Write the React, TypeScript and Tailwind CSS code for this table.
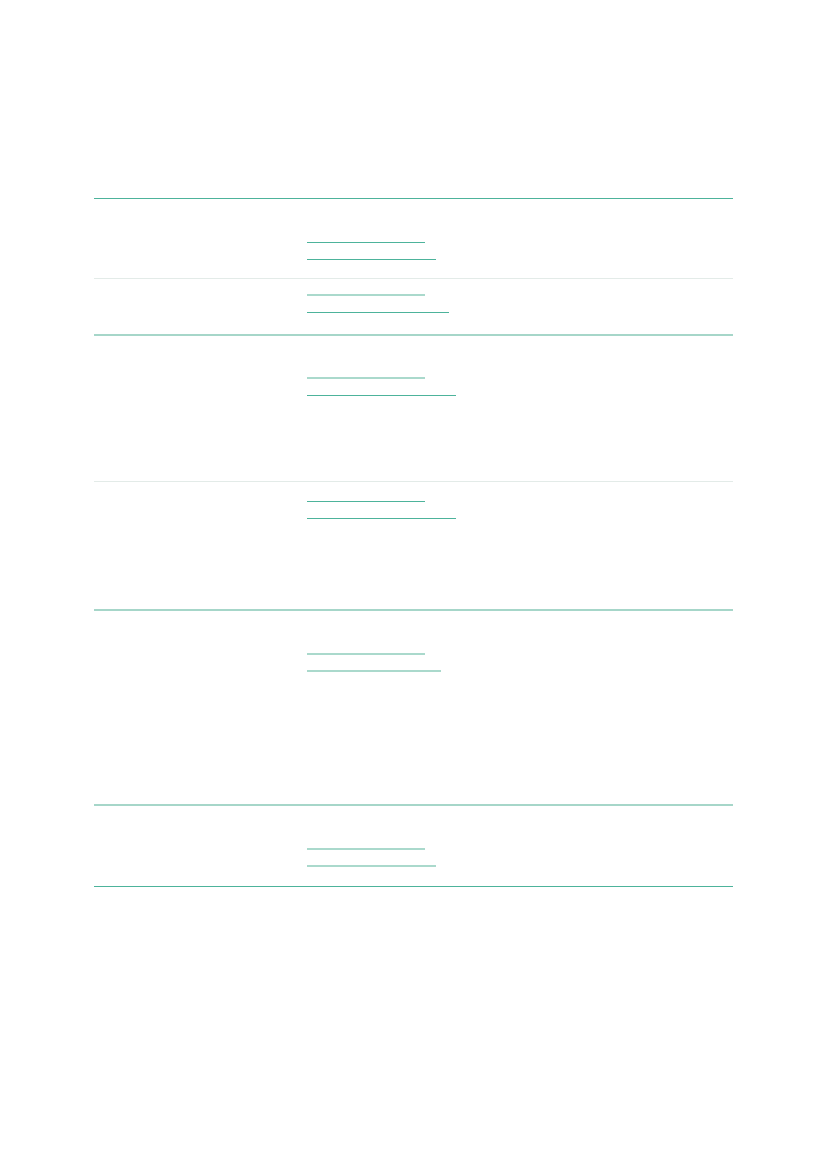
import React from 'react'

interface Row {
  height: string
  pad: string
  border: string
  links: { width: string; color: string }[]
}

// line colours taken from the screenshot; pale lines sit across two pixels
const dark = 'border-b border-[#4db39b]'
const pale = 'border-b-2 border-[#aad9cc]'

const rows: Row[] = [
  {
    height: 'h-[80px]',
    pad: 'pt-[27px]',
    border: 'border-b border-[#e3ebe8]',
    links: [
      { width: 'w-[118px]', color: dark },
      { width: 'w-[129px]', color: dark },
    ],
  },
  {
    height: 'h-[57px]',
    pad: 'pt-0',
    border: 'border-b-2 border-[#a6d6c9]',
    links: [
      { width: 'w-[118px]', color: pale },
      { width: 'w-[142px]', color: dark },
    ],
  },
  {
    height: 'h-[146px]',
    pad: 'pt-[26px]',
    border: 'border-b border-[#e3ebe8]',
    links: [
      { width: 'w-[118px]', color: pale },
      { width: 'w-[149px]', color: dark },
    ],
  },
  {
    height: 'h-[129px]',
    pad: 'pt-[3px]',
    border: 'border-b-2 border-[#a6d6c9]',
    links: [
      { width: 'w-[118px]', color: dark },
      { width: 'w-[149px]', color: dark },
    ],
  },
  {
    height: 'h-[195px]',
    pad: 'pt-[27px]',
    border: 'border-b-2 border-[#a6d6c9]',
    links: [
      { width: 'w-[118px]', color: pale },
      { width: 'w-[134px]', color: pale },
    ],
  },
  {
    height: 'h-[81px]',
    pad: 'pt-[27px]',
    border: 'border-b border-[#4db39b]',
    links: [
      { width: 'w-[118px]', color: pale },
      { width: 'w-[129px]', color: pale },
    ],
  },
]

export default function App() {
  return (
    <div className="min-h-[1169px] bg-white pt-[198px] font-['Liberation_Sans',sans-serif]">
      <div className="ml-[94px] w-[639px] border-t border-[#4db39b]">
        {rows.map((row, i) => (
          <div
            key={i}
            className={`grid grid-cols-[191px_257px_191px] box-border ${row.height} ${row.border}`}
          >
            {/* Label */}
            <div />

            {/* Links */}
            <div className={`pl-[22px] ${row.pad}`}>
              {row.links.map((l, j) => (
                <a
                  key={j}
                  className={`block h-[17px] box-border ${l.width} ${l.color}`}
                />
              ))}
            </div>

            {/* Notes */}
            <div />
          </div>
        ))}
      </div>
    </div>
  )
}
